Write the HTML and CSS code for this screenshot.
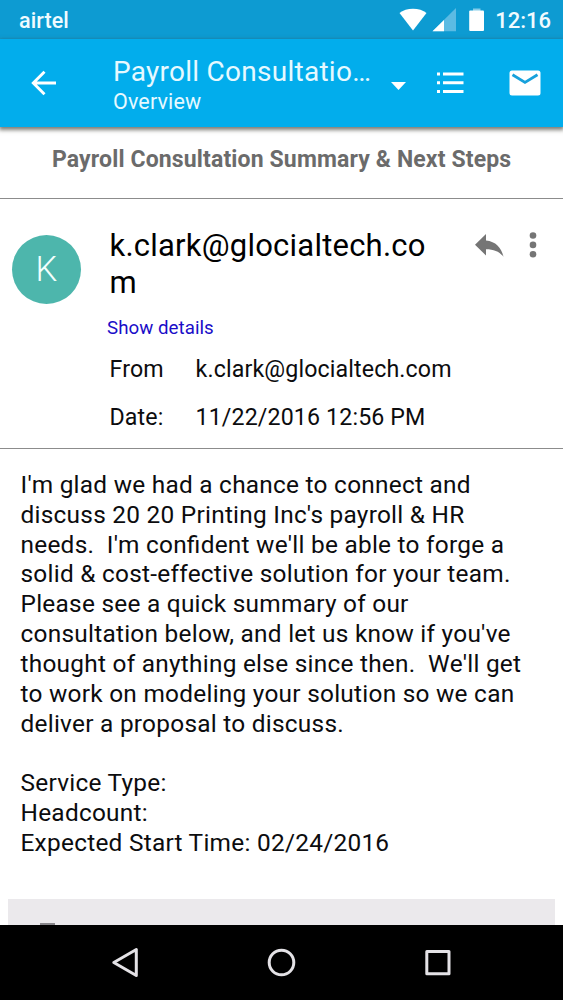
FILE: index.html
```html
<!DOCTYPE html>
<html lang="en">
<head>
<meta charset="utf-8">
<title>Payroll Consultation</title>
<link rel="stylesheet" href="styles.css">
</head>
<body>
<div class="screen">
  <div class="status">
    <span class="carrier">airtel</span>
    <svg class="status-icons" width="92" height="39" viewBox="0 0 92 39">
      <path d="M.500 13C7 7.300 21 7.300 27.500 13L14 30.500Z" fill="#fff"/>
      <path d="M33.500 31.300L57 8V31.300Z" fill="#5cbbe3"/>
      <path d="M33.500 31.300L45 20V31.300Z" fill="#fff"/>
      <path d="M74 8.500H81.500V11H74Z" fill="#85cce9"/>
      <rect x="70.200" y="10.500" width="14.800" height="20.500" rx="1" fill="#fff"/>
    </svg>
    <span class="clock">12:16</span>
  </div>
  <header class="toolbar">
    <svg class="back" width="26" height="26" viewBox="0 0 26 26" fill="none" stroke="#fff" stroke-width="2.900"><path d="M25 13H3M13.500 1.800L2.300 13L13.500 24.200"/></svg>
    <div class="titles">
      <div class="title">Payroll Consultatio…</div>
      <div class="subtitle">Overview</div>
    </div>
    <svg class="caret" width="15" height="8" viewBox="0 0 15 8"><path d="M0 0H15L7.500 8Z" fill="#fff"/></svg>
    <svg class="list" width="27" height="22" viewBox="0 0 27 22" fill="#fff"><path d="M0 .500H3V3.500H0ZM6 .500H26.500V3.500H6ZM0 9.300H3V12.300H0ZM6 9.300H26.500V12.300H6ZM0 18.100H3V21.100H0ZM6 18.100H26.500V21.100H6Z"/></svg>
    <svg class="mail" width="32" height="26" viewBox="0 0 32 26"><rect x=".500" y=".500" width="31" height="25" rx="2.500" fill="#fff"/><path d="M3.500 4.800L16 12.400L28.500 4.800" fill="none" stroke="#17a1dc" stroke-width="2.800"/></svg>
  </header>
  <main class="content">
    <h1 class="subject">Payroll Consultation Summary &amp; Next Steps</h1>
    <section class="sender">
      <div class="avatar">K</div>
      <div class="info">
        <div class="name">k.clark@glocialtech.co<br>m</div>
        <a class="details">Show details</a>
        <div class="row"><span class="label">From</span><span class="from">k.clark@glocialtech.com</span></div>
        <div class="row"><span class="label">Date:</span><span class="date">11/22/2016 12:56 PM</span></div>
      </div>
      <svg class="reply" width="29" height="24" viewBox="0 0 29 24"><path d="M0 10.800L11 0V6.500C21 7.500 26.500 14 28.500 22.800C24.500 17.500 19 15.200 11 15.200V21.500Z" fill="#757575"/></svg>
      <svg class="more" width="8" height="26" viewBox="0 0 8 26" fill="#757575"><circle cx="4" cy="3.500" r="3.300"/><circle cx="4" cy="12.900" r="3.300"/><circle cx="4" cy="22.300" r="3.300"/></svg>
    </section>
    <article class="message">
      <p>I'm glad we had a chance to connect and<br>discuss 20 20 Printing Inc's payroll &amp; HR<br>needs.&nbsp; I'm confident we'll be able to forge a<br>solid &amp; cost-effective solution for your team.<br>Please see a quick summary of our<br>consultation below, and let us know if you've<br>thought of anything else since then.&nbsp; We'll get<br>to work on modeling your solution so we can<br>deliver a proposal to discuss.</p>
      <p>Service Type:<br>Headcount:<br>Expected Start Time: 02/24/2016</p>
    </article>
    <div class="attachment"><span class="file-edge"></span></div>
  </main>
  <nav class="navbar">
    <svg width="563" height="75" viewBox="0 0 563 75" fill="none" stroke="#e4e2e6" stroke-width="3" stroke-linejoin="round"><path d="M113.800 37.500L136.300 24.500V50.500Z"/><circle cx="281.500" cy="37.500" r="12.300"/><rect x="426.800" y="26.500" width="22.200" height="22.200"/></svg>
  </nav>
</div>
</body>
</html>
```
FILE: styles.css
```css
* { box-sizing: border-box; }
body { margin: 0; background: #fff; font-family: Roboto, "Liberation Sans", sans-serif; }
svg { display: block; flex: none; }
.screen { width: 563px; height: 1000px; display: flex; flex-direction: column; overflow: hidden; color: #0c0c0e; white-space: nowrap; }

.status { flex: none; height: 39px; background: #0d9bd2; color: #f0fbff; display: flex; padding: 0 12px 0 19px; line-height: 42px; font-weight: 500; }
.carrier { flex: 1; font-size: 21.5px; letter-spacing: .1px; }
.status-icons { margin-right: 3px; }
.clock { font-size: 22px; width: 57px; text-align: right; }

.toolbar { flex: none; height: 88px; background: #02adec; color: #e6f9ff; display: flex; align-items: flex-start; box-shadow: 0 2px 4px 1px rgba(70, 70, 60, .7); position: relative; }
.back { margin: 31px 0 0 31px; }
.titles { margin: 16px 0 0 56px; width: 278px; }
.title { font-size: 28px; line-height: 34px; letter-spacing: .26px; }
.subtitle { font-size: 21.5px; line-height: 26px; letter-spacing: .15px; }
.caret { margin-top: 43px; }
.list { margin: 33px 0 0 31px; }
.mail { margin: 31px 0 0 45px; }

.content { flex: 1; min-height: 0; display: flex; flex-direction: column; }
.subject { flex: none; margin: 0; height: 72px; padding-left: 52px; font-size: 23px; line-height: 66px; letter-spacing: .14px; font-weight: 700; color: #6b6b6b; border-bottom: 1.5px solid #8c8c8c; }
.sender { flex: none; height: 250px; display: flex; align-items: flex-start; border-bottom: 1.5px solid #8c8c8c; }
.avatar { width: 69px; height: 69px; margin: 36px 0 0 12px; border-radius: 50%; background: #4db6ac; color: #f2fffd; font-size: 34.5px; font-weight: 300; line-height: 69px; text-align: center; }
.info { margin: 28px 0 0 28.5px; width: 365.5px; }
.name { font-size: 31px; line-height: 37px; letter-spacing: .22px; color: #000; }
.details { display: block; margin: 15px 0 5px -2.5px; font-size: 18.7px; line-height: 24px; letter-spacing: .05px; color: #1a0dc8; }
.row { display: flex; height: 48px; line-height: 48px; font-size: 23.2px; letter-spacing: .13px; }
.label { width: 86px; }
.reply { margin-top: 35px; }
.more { margin: 33px 0 0 25px; }

.message { flex: none; padding: 21px 20px 0 20.5px; height: 450px; font-size: 24.4px; line-height: 29.83px; letter-spacing: .26px; font-feature-settings: "liga" 1; }
.message p { margin: 0 0 29.83px; }
.attachment { flex: none; height: 40px; margin: 0 8px; background: #ebe9ec; padding: 24px 0 0 32px; }
.file-edge { display: block; width: 15px; height: 4px; background: #88868a; }

.navbar { flex: none; height: 75px; background: #000; position: relative; }
```
